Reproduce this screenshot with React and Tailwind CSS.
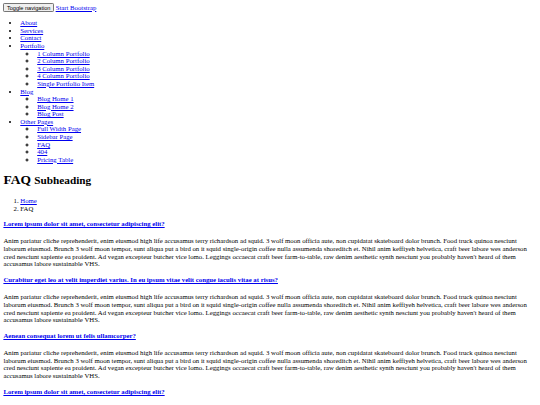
import React from "react";

const link = "text-[#0000ee] underline";

const nav = [
  { label: "About" },
  { label: "Services" },
  { label: "Contact" },
  {
    label: "Portfolio",
    children: ["1 Column Portfolio", "2 Column Portfolio", "3 Column Portfolio", "4 Column Portfolio", "Single Portfolio Item"],
  },
  { label: "Blog", children: ["Blog Home 1", "Blog Home 2", "Blog Post"] },
  { label: "Other Pages", children: ["Full Width Page", "Sidebar Page", "FAQ", "404", "Pricing Table"] },
];

const answer =
  "Anim pariatur cliche reprehenderit, enim eiusmod high life accusamus terry richardson ad squid. 3 wolf moon officia aute, non cupidatat skateboard dolor brunch. Food truck quinoa nesciunt laborum eiusmod. Brunch 3 wolf moon tempor, sunt aliqua put a bird on it squid single-origin coffee nulla assumenda shoreditch et. Nihil anim keffiyeh helvetica, craft beer labore wes anderson cred nesciunt sapiente ea proident. Ad vegan excepteur butcher vice lomo. Leggings occaecat craft beer farm-to-table, raw denim aesthetic synth nesciunt you probably haven't heard of them accusamus labore sustainable VHS.";

const questions = [
  "Lorem ipsum dolor sit amet, consectetur adipiscing elit?",
  "Curabitur eget leo at velit imperdiet varius. In eu ipsum vitae velit congue iaculis vitae at risus?",
  "Aenean consequat lorem ut felis ullamcorper?",
  "Lorem ipsum dolor sit amet, consectetur adipiscing elit?",
  "Curabitur eget leo at velit imperdiet varius. In eu ipsum vitae velit congue iaculis vitae at risus?",
];

export default function App() {
  return (
    <div className="bg-white text-black font-['Liberation_Serif',serif] text-[6.75px] leading-[1.15] px-[3.4px] pt-[2.6px] pb-[3.4px]">
      <div className="leading-[9px]">
        <button className="font-['Liberation_Sans',sans-serif] text-[5.6px] leading-[1.15] px-[2.5px] py-[0.4px] bg-[#efefef] border-[0.8px] border-[#767676] rounded-[1.2px] text-black">
          Toggle navigation
        </button>{" "}
        <a className={link} href="#">
          Start Bootstrap
        </a>
      </div>

      <ul className="list-disc pl-[16.9px] my-[6.75px] leading-[7.6px]">
        {nav.map((item) => (
          <li key={item.label}>
            <a className={link} href="#">
              {item.label}
            </a>
            {item.children && (
              <ul className="list-[circle] pl-[16.9px]">
                {item.children.map((c) => (
                  <li key={c}>
                    <a className={link} href="#">
                      {c}
                    </a>
                  </li>
                ))}
              </ul>
            )}
          </li>
        ))}
      </ul>

      <h1 className="text-[13.5px] font-bold my-[9px] leading-[1.15]">
        FAQ <small className="text-[11.25px]">Subheading</small>
      </h1>

      <ol className="list-decimal pl-[16.9px] my-[6.75px] leading-[7.6px]">
        <li>
          <a className={link} href="#">
            Home
          </a>
        </li>
        <li>FAQ</li>
      </ol>

      {questions.map((q, i) => (
        <div key={i}>
          <h4 className="font-bold mt-[8.2px] mb-[9px]">
            <a className={link} href="#">
              {q}
            </a>
          </h4>
          <p className="my-[6.75px]">{answer}</p>
        </div>
      ))}
    </div>
  );
}
